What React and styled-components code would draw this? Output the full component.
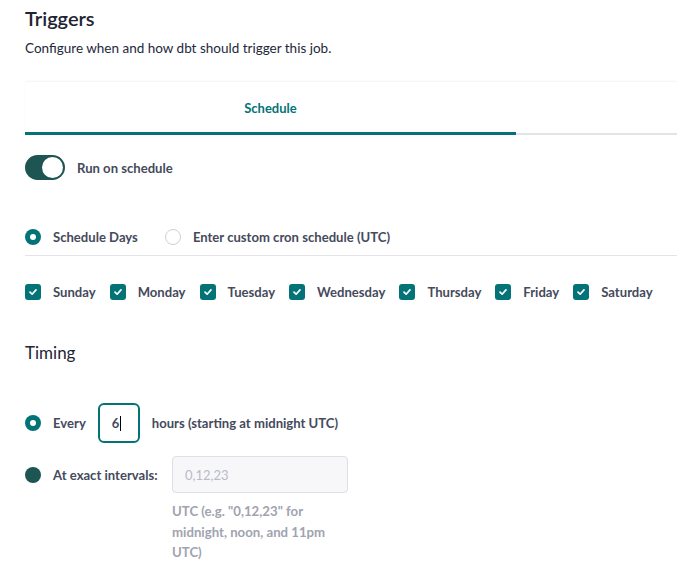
import React from "react";
import styled, { createGlobalStyle } from "styled-components";

const Global = createGlobalStyle`
  html, body { margin: 0; padding: 0; background: #fff; overflow: hidden; }
  body { font-family: Lato, "Noto Sans", sans-serif; }
  * { box-sizing: border-box; }
`;

const TEAL = "#047377";
const DARK = "#1d5552";

const Page = styled.div`
  width: 1000px;
  padding: 5px 0 0 25px;
`;

const Title = styled.h2`
  margin: 0;
  font-size: 20px;
  font-weight: 600;
  line-height: 26px;
  color: #1f2433;
`;

const Subtitle = styled.p`
  margin: 8px 0 0;
  font-size: 13.5px;
  line-height: 18px;
  color: #23283a;
`;

const TabBar = styled.div`
  margin-top: 25px;
  display: flex;
  width: 982px;
  background: #fff;
  border-radius: 4px 4px 0 0;
  box-shadow: 0 -1px 2px rgba(0, 0, 0, 0.05);
  border-bottom: 2px solid #e4e4e8;
`;

const Tab = styled.div`
  width: 491px;
  height: 53px;
  display: flex;
  align-items: center;
  justify-content: center;
  padding-top: 2px;
  font-size: 13px;
  font-weight: 700;
  color: ${(p) => (p.$active ? TEAL : "#555")};
  border-bottom: 3px solid ${(p) => (p.$active ? TEAL : "transparent")};
  margin-bottom: -2px;
`;

const Row = styled.div`
  display: flex;
  align-items: center;
  gap: ${(p) => p.$gap || 12}px;
  margin-top: ${(p) => p.$mt || 0}px;
`;

const Toggle = styled.div`
  width: 40px;
  height: 25px;
  border-radius: 13px;
  background: ${DARK};
  position: relative;
  flex: none;
`;

const Knob = styled.span`
  position: absolute;
  right: 2px;
  top: 2px;
  width: 21px;
  height: 21px;
  border-radius: 50%;
  background: #fff;
`;

const Label = styled.span`
  font-size: 13.1px;
  font-weight: 700;
  line-height: 16px;
  color: ${(p) => p.$color || "#454a5c"};
  white-space: nowrap;
`;

const Radio = styled.span`
  width: 16px;
  height: 16px;
  border-radius: 50%;
  flex: none;
  display: inline-flex;
  align-items: center;
  justify-content: center;
  background: ${(p) => (p.$variant === "on" ? TEAL : p.$variant === "dark" ? DARK : "#fff")};
  border: ${(p) => (p.$variant === "off" ? "1px solid #cfd0d8" : "none")};
  &::after {
    content: "";
    display: ${(p) => (p.$variant === "on" ? "block" : "none")};
    width: 6px;
    height: 6px;
    border-radius: 50%;
    background: #fff;
  }
`;

const RadioItem = styled.label`
  display: inline-flex;
  align-items: center;
  gap: 12px;
`;

const Divider = styled.div`
  height: 1px;
  background: #e3e3e8;
  margin-top: 10px;
`;

const Days = styled.div`
  display: flex;
  align-items: center;
  gap: 14px;
  margin-top: 28px;
`;

const DayItem = styled.label`
  display: inline-flex;
  align-items: center;
  gap: 12px;
`;

const Check = styled.span`
  width: 16px;
  height: 16px;
  border-radius: 3px;
  background: ${TEAL};
  display: inline-flex;
  align-items: center;
  justify-content: center;
  flex: none;
`;

const Subhead = styled.h3`
  margin: 42px 0 0;
  font-size: 17px;
  font-weight: 400;
  line-height: 22px;
  color: #1f2433;
`;

const NumBox = styled.div`
  width: 42px;
  height: 40px;
  border: 2px solid ${TEAL};
  border-radius: 6px;
  display: flex;
  align-items: center;
  padding-left: 12px;
  font-size: 13px;
  font-weight: 700;
  color: #454a5c;
`;

const Caret = styled.span`
  display: inline-block;
  width: 1px;
  height: 15px;
  background: #000;
  margin-left: 1px;
`;

const ExactRow = styled.div`
  display: flex;
  align-items: flex-start;
  margin-top: 13px;
`;

const ExactLabel = styled.div`
  display: flex;
  align-items: center;
  gap: 12px;
  height: 37px;
  width: 147px;
`;

const FieldCol = styled.div`
  width: 176px;
  display: flex;
  flex-direction: column;
`;

const Field = styled.div`
  height: 37px;
  border: 1px solid #dfe0e6;
  border-radius: 4px;
  background: #f7f7f9;
  display: flex;
  align-items: center;
  padding-left: 12px;
  font-size: 13px;
  color: #b9bbc6;
`;

const Help = styled.div`
  margin-top: 8px;
  font-size: 13.2px;
  font-weight: 700;
  line-height: 20.5px;
  color: #a1a3ae;
  padding-right: 8px;
`;

const days = ["Sunday", "Monday", "Tuesday", "Wednesday", "Thursday", "Friday", "Saturday"];

const CheckIcon = () => (
  <svg width="10" height="10" viewBox="0 0 10 10">
    <path d="M2 5.2 L4.1 7.2 L8 2.9" fill="none" stroke="#fff" strokeWidth="1.7" strokeLinecap="round" strokeLinejoin="round" />
  </svg>
);

export default function App() {
  return (
    <>
      <Global />
      <Page>
        <Title>Triggers</Title>
        <Subtitle>Configure when and how dbt should trigger this job.</Subtitle>
        <TabBar>
          <Tab $active>Schedule</Tab>
          <Tab />
        </TabBar>
        <Row $mt={20}>
          <Toggle>
            <Knob />
          </Toggle>
          <Label>Run on schedule</Label>
        </Row>
        <Row $mt={49} $gap={27}>
          <RadioItem>
            <Radio $variant="on" />
            <Label>Schedule Days</Label>
          </RadioItem>
          <RadioItem>
            <Radio $variant="off" />
            <Label>Enter custom cron schedule (UTC)</Label>
          </RadioItem>
        </Row>
        <Divider />
        <Days>
          {days.map((d) => (
            <DayItem key={d}>
              <Check>
                <CheckIcon />
              </Check>
              <Label>{d}</Label>
            </DayItem>
          ))}
        </Days>
        <Subhead>Timing</Subhead>
        <Row $mt={39} $gap={12}>
          <Radio $variant="on" />
          <Label>Every</Label>
          <NumBox>
            6<Caret />
          </NumBox>
          <Label>hours (starting at midnight UTC)</Label>
        </Row>
        <ExactRow>
          <ExactLabel>
            <Radio $variant="dark" />
            <Label>At exact intervals:</Label>
          </ExactLabel>
          <FieldCol>
            <Field>0,12,23</Field>
            <Help>UTC (e.g. "0,12,23" for midnight, noon, and 11pm UTC)</Help>
          </FieldCol>
        </ExactRow>
      </Page>
    </>
  );
}
